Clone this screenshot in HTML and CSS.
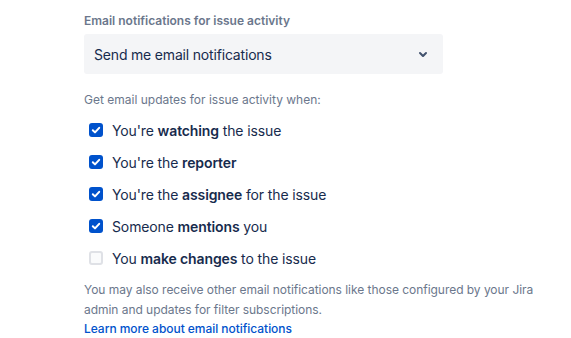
FILE: index.html
```html
<!DOCTYPE html>
<html lang="en">
<head>
<meta charset="utf-8">
<title>Email notifications</title>
<link rel="stylesheet" href="styles.css">
</head>
<body>
<div class="wrap">
  <div class="field-label">Email notifications for issue activity</div>
  <div class="select">
    <span class="select-value">Send me email notifications</span>
    <svg class="chevron" width="24" height="24" viewBox="0 0 24 24"><path fill="currentColor" d="M8.292 10.293a1.009 1.009 0 0 0 0 1.419l2.939 2.965c.218.215.5.322.779.322s.556-.107.769-.322l2.93-2.955a1.01 1.01 0 0 0 0-1.419.987.987 0 0 0-1.406 0l-2.298 2.317-2.307-2.327a.99.99 0 0 0-1.406 0z"/></svg>
  </div>
  <div class="hint">Get email updates for issue activity when:</div>
  <ul class="options">
    <li class="option"><span class="box checked"><svg width="14" height="14" viewBox="0 0 14 14"><path d="M3.8 7.2l2.2 2.2 4.2-4.6" fill="none" stroke="#fff" stroke-width="2" stroke-linecap="round" stroke-linejoin="round"/></svg></span><span>You're <b>watching</b> the issue</span></li>
    <li class="option"><span class="box checked"><svg width="14" height="14" viewBox="0 0 14 14"><path d="M3.8 7.2l2.2 2.2 4.2-4.6" fill="none" stroke="#fff" stroke-width="2" stroke-linecap="round" stroke-linejoin="round"/></svg></span><span>You're the <b>reporter</b></span></li>
    <li class="option"><span class="box checked"><svg width="14" height="14" viewBox="0 0 14 14"><path d="M3.8 7.2l2.2 2.2 4.2-4.6" fill="none" stroke="#fff" stroke-width="2" stroke-linecap="round" stroke-linejoin="round"/></svg></span><span>You're the <b>assignee</b> for the issue</span></li>
    <li class="option"><span class="box checked"><svg width="14" height="14" viewBox="0 0 14 14"><path d="M3.8 7.2l2.2 2.2 4.2-4.6" fill="none" stroke="#fff" stroke-width="2" stroke-linecap="round" stroke-linejoin="round"/></svg></span><span>Someone <b>mentions</b> you</span></li>
    <li class="option"><span class="box"></span><span>You <b>make changes</b> to the issue</span></li>
  </ul>
  <p class="footer">You may also receive other email notifications like those configured by your Jira admin and updates for filter subscriptions.<br><a href="#" class="link">Learn more about email notifications</a></p>
</div>
</body>
</html>
```
FILE: styles.css
```css
html, body {
  margin: 0;
  padding: 0;
  background: #fff;
}
body {
  font-family: Inter, "Noto Sans", sans-serif;
  color: #172B4D;
}
.wrap {
  padding: 13px 0 0 84px;
  width: 460px;
}
.field-label {
  font-size: 12px;
  line-height: 16px;
  font-weight: 600;
  color: #6B778C;
  margin-bottom: 5px;
}
.select {
  width: 359px;
  height: 40px;
  box-sizing: border-box;
  background: #F4F5F7;
  border-radius: 3px;
  display: flex;
  align-items: center;
  justify-content: space-between;
  padding: 0 8px 0 10px;
}
.select-value {
  font-size: 14px;
  letter-spacing: -0.18px;
  color: #172B4D;
}
.chevron {
  color: #42526E;
}
.hint {
  margin-top: 16px;
  font-size: 12px;
  line-height: 20px;
  color: #6B778C;
}
.options {
  list-style: none;
  margin: 4px 0 0;
  padding: 0;
}
.option {
  height: 32px;
  display: flex;
  align-items: center;
  font-size: 14px;
  letter-spacing: -0.12px;
  color: #172B4D;
}
.option b {
  font-weight: 600;
}
.box {
  width: 14px;
  height: 14px;
  box-sizing: border-box;
  border-radius: 3px;
  margin-left: 5px;
  margin-right: 9px;
  background: #FAFBFC;
  border: 2px solid #DFE1E6;
  display: flex;
  align-items: center;
  justify-content: center;
}
.box.checked {
  background: #0052CC;
  border: none;
}
.footer {
  margin: 6px 0 0;
  font-size: 12px;
  line-height: 19.5px;
  letter-spacing: -0.04px;
  color: #6B778C;
}
.link {
  color: #0052CC;
  font-weight: 500;
  text-decoration: none;
}
```
